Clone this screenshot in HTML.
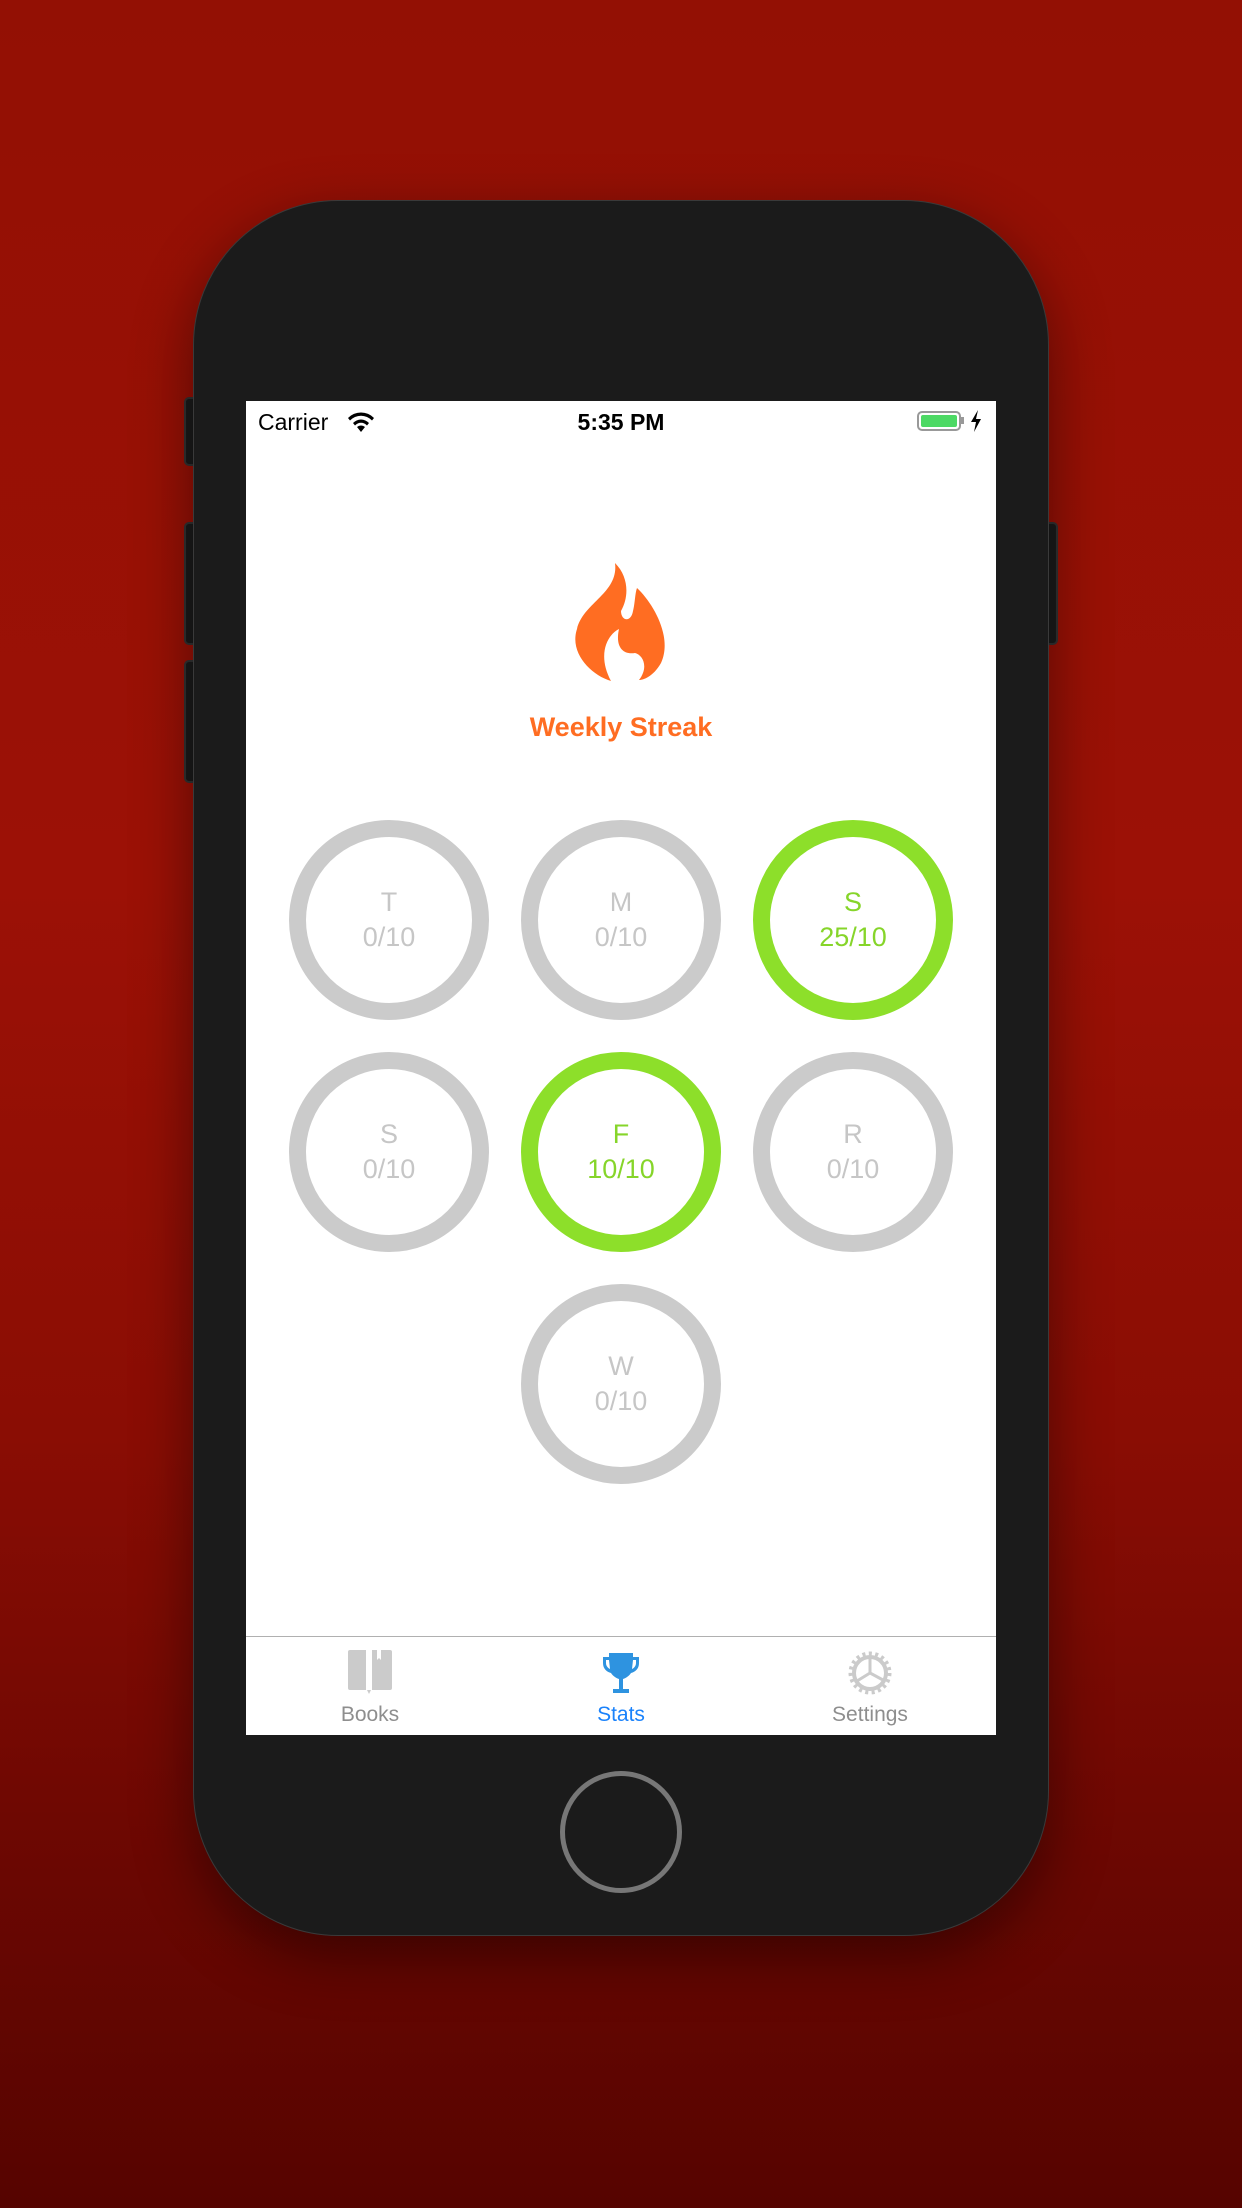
<!DOCTYPE html>
<html><head><meta charset="utf-8"><style>
html,body{margin:0;padding:0}
body{width:1242px;height:2208px;position:relative;overflow:hidden;font-family:"Liberation Sans",sans-serif;
background:linear-gradient(180deg,#931004 0%,#9c1106 40%,#8a0d04 65%,#6a0702 85%,#560400 100%);}
.phone{position:absolute;left:193px;top:200px;width:856px;height:1736px;background:#1b1b1b;border-radius:145px;box-shadow:0 20px 60px rgba(0,0,0,.45);border:1px solid #3a3a3a;box-sizing:border-box}
.btn{position:absolute;background:#1b1b1b;border:2px solid #333;border-radius:5px;box-sizing:border-box}
.screen{position:absolute;left:246px;top:401px;width:750px;height:1334px;background:#fff;overflow:hidden}
.sb{position:absolute;top:8px;font-size:23px;color:#000}
.ring{position:absolute;width:200px;height:200px;border-radius:50%;box-sizing:border-box;border:17px solid #cbcbcb;color:#c6c6c6;text-align:center;font-size:27px;line-height:35px}
.ring.g{border-color:#8ddf2a;color:#86d52a}
.ring div{padding-top:48px}
.tab{position:absolute;top:1302px;font-size:21px;color:#8e8e8e;width:200px;text-align:center}
</style></head><body>
<div class="btn" style="left:184px;top:397px;width:14px;height:69px"></div>
<div class="btn" style="left:184px;top:522px;width:14px;height:123px"></div>
<div class="btn" style="left:184px;top:660px;width:14px;height:123px"></div>
<div class="btn" style="left:1044px;top:522px;width:14px;height:123px"></div>
<div class="phone"></div>
<div style="position:absolute;left:560px;top:1771px;width:122px;height:122px;border-radius:50%;border:5px solid #777;box-sizing:border-box"></div>
<div class="screen">
  <div class="sb" style="left:12px">Carrier</div>
  <svg style="position:absolute;left:100px;top:10px" width="30" height="22" viewBox="0 0 30 22"><path d="M15 21 L11 16 A6 6 0 0 1 19 16 Z M7 12 A11 11 0 0 1 23 12 L21 14.5 A8 8 0 0 0 9 14.5Z M2 7 A18 18 0 0 1 28 7 L26 9.5 A15 15 0 0 0 4 9.5Z" fill="#000"/></svg>
  <div class="sb" style="left:0;width:750px;text-align:center;font-weight:bold">5:35 PM</div>
  <div style="position:absolute;left:671px;top:10px;width:44px;height:20px;border:2px solid #999;border-radius:5px;box-sizing:border-box;padding:2px"><div style="background:#4cd964;width:100%;height:100%;border-radius:2px"></div></div>
  <div style="position:absolute;left:715px;top:16px;width:3px;height:7px;background:#999"></div>
  <svg style="position:absolute;left:724px;top:9px" width="12" height="22" viewBox="0 0 12 22"><path d="M8 0 L1 12 H6 L4 22 L11 9 H6 Z" fill="#000"/></svg>
  <svg style="position:absolute;left:327px;top:162px" width="96" height="118" viewBox="0 0 96 118">
    <path d="M42 0 C56 14 56 34 48 48 C48 58 58 60 60 48 C62 40 62 30 64 25 C80 40 100 74 88 100 C80 114 70 117 66 117 C76 104 70 92 62 90 C50 92 42 84 46 66 C34 72 24 92 38 118 C18 112 -4 90 4 66 C10 40 46 30 42 0Z" fill="#ff6d22"/>
  </svg>
  <div style="position:absolute;top:311px;width:750px;text-align:center;font-size:27px;font-weight:bold;color:#ff6d22">Weekly Streak</div>
  <div class="ring" style="left:43px;top:419px"><div>T<br>0/10</div></div>
  <div class="ring" style="left:275px;top:419px"><div>M<br>0/10</div></div>
  <div class="ring g" style="left:507px;top:419px"><div>S<br>25/10</div></div>
  <div class="ring" style="left:43px;top:651px"><div>S<br>0/10</div></div>
  <div class="ring g" style="left:275px;top:651px"><div>F<br>10/10</div></div>
  <div class="ring" style="left:507px;top:651px"><div>R<br>0/10</div></div>
  <div class="ring" style="left:275px;top:883px"><div>W<br>0/10</div></div>
  <div style="position:absolute;left:0;top:1235px;width:750px;height:1px;background:#b0b0b0"></div>
  <svg style="position:absolute;left:101px;top:1247px" width="46" height="46" viewBox="0 0 46 46"><path d="M3 2 H19 V42 H3 Q1 42 1 40 V4 Q1 2 3 2Z M25 2 H30 V12 L32 10 L34 12 V2 H43 Q45 2 45 4 V40 Q45 42 43 42 H25Z M20 42 L22 46 L24 42Z" fill="#cbcbcb"/></svg>
  <svg style="position:absolute;left:356px;top:1250px" width="38" height="44" viewBox="0 0 38 44"><path d="M7 2 H31 V6 H37 V12 C37 18 33 21 29 22 C27 25 24 27 21 28 V38 H27 V42 H11 V38 H17 V28 C14 27 11 25 9 22 C5 21 1 18 1 12 V6 H7Z M4 9 V12 C4 15 6 17 8 18 L7 9Z M34 9 H31 L30 18 C32 17 34 15 34 12Z" fill="#2e93e0"/></svg>
  <svg style="position:absolute;left:601px;top:1249px" width="46" height="46" viewBox="0 0 46 46"><circle cx="23" cy="23" r="16" fill="none" stroke="#cbcbcb" stroke-width="4"/><circle cx="23" cy="23" r="19" fill="none" stroke="#cbcbcb" stroke-width="5" stroke-dasharray="3 3.3"/><path d="M23 7 V23 L36 30 M23 23 L10 31" stroke="#cbcbcb" stroke-width="3" fill="none"/></svg>
  <div class="tab" style="left:24px">Books</div>
  <div class="tab" style="left:275px;color:#1a82fb">Stats</div>
  <div class="tab" style="left:524px">Settings</div>
</div>
</body></html>
